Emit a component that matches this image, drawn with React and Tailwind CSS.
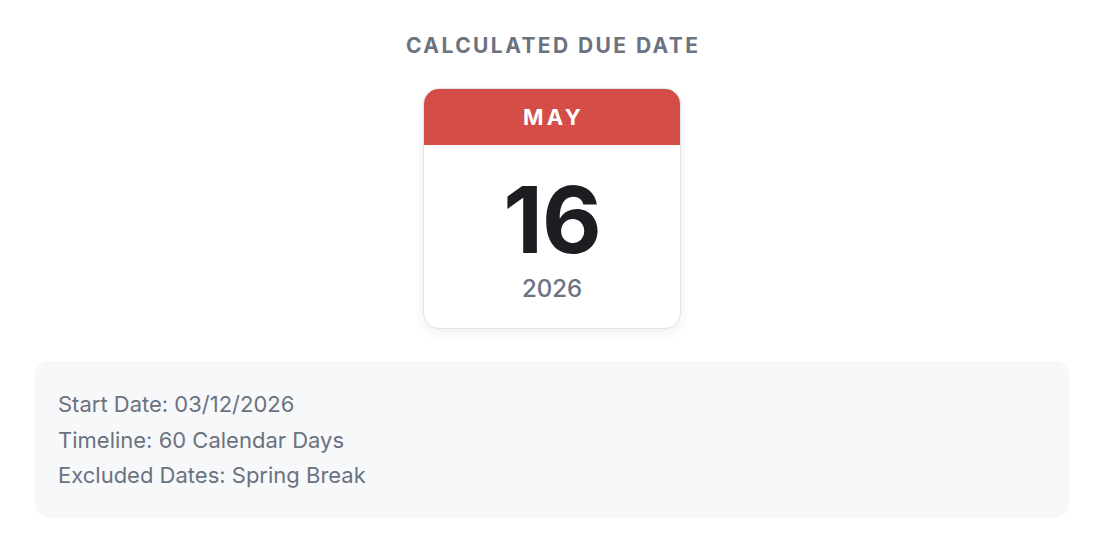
export default function App() {
  return (
    <div
      className="w-full min-h-[556px] bg-white pl-[34px] pr-[40px] pt-[32px] flex flex-col items-center"
      style={{ fontFamily: "Inter, 'Noto Sans', sans-serif" }}
    >
      <h2 className="text-[21px] leading-[28px] font-bold tracking-[0.115em] pl-[0.115em] text-[#6b7280]">
        CALCULATED DUE DATE
      </h2>

      <div className="mt-[28px] w-[258px] rounded-2xl border border-[#e2e3e8] bg-white shadow-[0_4px_12px_rgba(0,0,0,0.06)] overflow-hidden">
        <div className="h-[56px] bg-[#d44d47] flex items-center justify-center">
          <span className="text-white text-[22px] font-bold tracking-[0.15em] pl-[0.15em]">
            MAY
          </span>
        </div>
        <div className="flex flex-col items-center pt-[29px] pb-[24px]">
          <div className="text-[92px] leading-[92px] font-bold text-[#1d1e22] tracking-[-0.01em]">
            16
          </div>
          <div className="mt-[8px] text-[24px] leading-[30px] font-medium text-[#6b7280]">
            2026
          </div>
        </div>
      </div>

      <div className="mt-[32px] w-full rounded-2xl bg-[#f7f8fa] px-6 pt-[26px] pb-[24px] text-[22px] leading-[35.5px] text-[#6b7280]">
        <div>Start Date: 03/12/2026</div>
        <div>Timeline: 60 Calendar Days</div>
        <div>Excluded Dates: Spring Break</div>
      </div>
    </div>
  );
}
